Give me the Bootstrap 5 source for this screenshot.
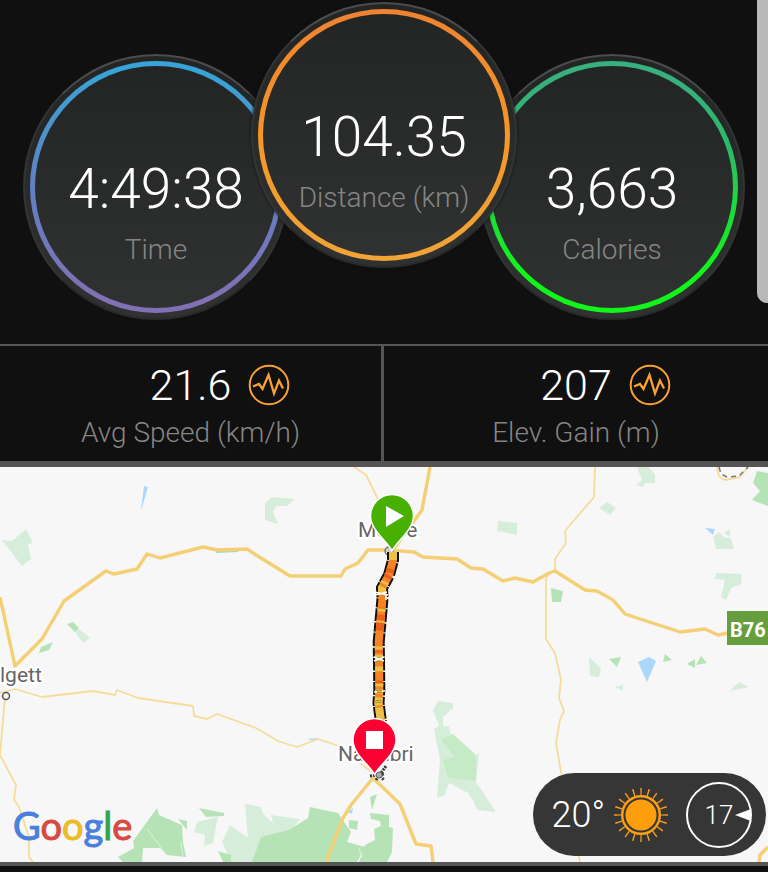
<!DOCTYPE html>
<html lang="en">
<head>
<meta charset="utf-8">
<meta name="viewport" content="width=device-width, initial-scale=1">
<title>Ride summary</title>
<link href="https://cdn.jsdelivr.net/npm/bootstrap@5.3.0/dist/css/bootstrap.min.css" rel="stylesheet">
<style>
body { background: #101010; font-family: Roboto, "Liberation Sans", sans-serif; font-weight: 300; }
.dials { padding: 2px 22px 24px; }
.dial { width: 266px; height: 266px; padding: 5px; background: linear-gradient(#232424, #303131); border: 2px solid #333434; border-top-color: #4c4c4e; border-bottom-color: #292a2a; flex: none; }
.dial-side { margin-top: 52px; }
.dial-main { margin: 0 -38px; z-index: 1; box-shadow: 0 0 3px #111; }
.ring { padding: 5px; }
.ring-time { background: linear-gradient(#38a3d6 5%, #6080c4 50%, #8270b4 95%); }
.ring-distance { background: linear-gradient(#ee8230, #f59628 50%, #f1a437); }
.ring-calories { background: linear-gradient(#36b07c 10%, #2bbb65 35%, #1bdd38 60%, #12f51a 85%); }
.face { background: linear-gradient(#232424, #303232); padding-top: 95px; }
.big-value { font-size: 55px; line-height: 56px; color: #fff; margin-bottom: 17px; }
.caption { font-size: 28px; line-height: 32px; color: #858585; }
.scroll-thumb { width: 11px; height: 303px; background: #b9b9b9; border-radius: 0 0 0 10px; }
.stats { border-top: 2px solid #555; border-bottom: 6px solid #555353; }
.stat { padding: 17px 0 12px; }
.stat:first-child { border-right: 3px solid #555; }
.stat-line { display: grid; grid-template-columns: 1fr auto 1fr; column-gap: 17px; align-items: center; }
.stat-line svg { grid-column: 3; }
.stat-value { grid-column: 2; font-size: 43px; line-height: 44px; color: #fff; }
.stat .caption { margin-top: 10px; }
.map { border-bottom: 4px solid #555; background: #f7f7f7; }
.place { font: 400 21px Roboto, "Liberation Sans", sans-serif; fill: #666; stroke: #fff; stroke-width: 5px; paint-order: stroke; stroke-linejoin: round; }
.shield { font: 700 20px Roboto, "Liberation Sans", sans-serif; fill: #fff; }
.brand { left: 13px; bottom: 15px; font: 400 38px/44px Lato, "Liberation Sans", sans-serif; }
.brand span { -webkit-text-stroke: 1px currentColor; }
.c-blue { color: #4a80dd; } .c-red { color: #d84a40; } .c-yellow { color: #ecbb25; } .c-green { color: #35a254; }
.weather { right: 2px; bottom: 6px; height: 83px; padding: 0 13px 0 18px; background: #363636; color: #fff; }
.temperature { font-size: 36px; line-height: 40px; }
.wind-text { font: 300 26px Roboto, "Liberation Sans", sans-serif; fill: #fff; }
</style>
</head>
<body>
<main class="position-relative overflow-hidden">
  <section class="dials d-flex justify-content-center align-items-start" aria-label="Totals">
    <div class="dial dial-side rounded-circle">
      <div class="ring ring-time rounded-circle h-100">
        <div class="face rounded-circle h-100 text-center">
          <div class="big-value">4:49:38</div>
          <div class="caption">Time</div>
        </div>
      </div>
    </div>
    <div class="dial dial-main rounded-circle">
      <div class="ring ring-distance rounded-circle h-100">
        <div class="face rounded-circle h-100 text-center">
          <div class="big-value">104.35</div>
          <div class="caption">Distance (km)</div>
        </div>
      </div>
    </div>
    <div class="dial dial-side rounded-circle">
      <div class="ring ring-calories rounded-circle h-100">
        <div class="face rounded-circle h-100 text-center">
          <div class="big-value">3,663</div>
          <div class="caption">Calories</div>
        </div>
      </div>
    </div>
  </section>
  <div class="scroll-thumb position-absolute top-0 end-0"></div>

  <section class="stats row g-0" aria-label="Averages">
    <div class="stat col-6 text-center">
      <div class="stat-line">
        <span class="stat-value">21.6</span>
        <svg width="42" height="42" viewBox="0 0 42 42" fill="none" stroke="#f9a132" aria-hidden="true"><circle cx="21" cy="21" r="19.3" stroke-width="2"/><path d="M5 22.500L11 20L14.500 25L20.500 11L26 29.500L31 16.500L35 24.500" stroke-width="2.300"/></svg>
      </div>
      <div class="caption">Avg Speed (km/h)</div>
    </div>
    <div class="stat col-6 text-center">
      <div class="stat-line">
        <span class="stat-value">207</span>
        <svg width="42" height="42" viewBox="0 0 42 42" fill="none" stroke="#f9a132" aria-hidden="true"><circle cx="21" cy="21" r="19.3" stroke-width="2"/><path d="M5 22.500L11 20L14.500 25L20.500 11L26 29.500L31 16.500L35 24.500" stroke-width="2.300"/></svg>
      </div>
      <div class="caption">Elev. Gain (m)</div>
    </div>
  </section>

  <section class="map position-relative" aria-label="Route map">
    <svg class="d-block w-100" viewBox="0 467 768 395" role="img" aria-label="Route from Moree to Narrabri">
      <g fill="#d6eed9">
        <path d="M2 540L12 541L26 529L33 543L28 544L31 559L22 566Z"/>
        <path d="M75 632L79 629L90 638L83 643Z"/>
        <path d="M272 497L295 499L287 506L276 506L273 512L278 524L265 520L265 503Z"/>
        <path d="M498 521L517 523L517 535L497 531Z"/>
        <path d="M637 467L648 467L655 474L655 483L645 483L643 487L636 485L642 480Z"/>
        <path d="M607 502L616 508L610 515L599 508Z"/>
        <path d="M719 532L725 538L731 538L734 549L716 549L713 537Z"/>
        <path d="M724 533L730 529L730 537Z"/>
        <path d="M716 573L742 574L741 584L731 588L726 600L721 597L725 580L715 579Z"/>
        <path d="M589 657L601 668L599 677L590 676Z"/>
        <path d="M615 687L623 685L623 691Z"/>
        <path d="M730 691L739 682L749 687Z"/>
        <path d="M438 701L453 703L453 708L443 717L443 726L449 726L450 733L476 756L479 753L476 782L496 812L477 810L474 802L468 793L449 783L444 796L437 797L440 760L434 729L439 726L433 710Z"/>
        <path d="M197 822L218 817L215 832L213 843L204 846L205 835L194 832Z"/>
        <path d="M245 804L261 807L263 814L273 823L271 815L300 819L290 832L256 862L231 862L222 842L230 825L248 838Z"/>
      </g>
      <path fill="#c5eac6" d="M453 734L476 755L476 781L448 778L443 760L455 757L441 740Z"/>
      <g fill="#b6e3b6">
        <path d="M67 624L73 622L79 628L75 632Z"/>
        <path d="M39 653L41 647L53 642L49 650Z"/>
        <path d="M757 471L768 473L768 506L752 500L760 491L753 483Z"/>
        <path d="M551 588L563 591L561 602L552 602Z"/>
        <path d="M609 659L621 657L617 667Z"/>
        <path d="M665 654L672 660L663 662Z"/>
        <path d="M687 664L695 659L695 668Z"/>
        <path d="M701 656L707 663L696 665Z"/>
        <path d="M157 808L159 815L182 825L183 842L186 857L167 855L160 848L143 848L142 862L123 862L118 857L134 848L133 841L152 815Z"/>
        <path d="M178 819L187 821L187 830Z"/>
        <path d="M199 808L224 813L224 816L206 817Z"/>
        <path d="M218 851L231 855L231 862L223 862Z"/>
        <path d="M252 862L261 837L289 830L308 818L310 807L338 813L351 832L347 842L365 847L357 862Z"/>
        <path d="M370 797L377 794L372 810Z"/>
        <path d="M349 820L358 821L357 830L349 828Z"/>
        <path d="M370 813L389 815L389 827L393 828L392 852L387 862L359 862L365 845L375 840L374 829L381 826L380 821L371 819Z"/>
      </g>
      <path d="M147 829L165 853M181 842L183 857M359 848L362 858" stroke="#dcf1dc" fill="none"/>
      <g fill="#abd7fd">
        <path d="M144 486L148 487L141 511Z"/>
        <path d="M705 528L715 529L713 535Z"/>
        <path d="M638 662L649 657L656 661L647 682Z"/>
        <path d="M348 812L353 808L352 814Z"/>
        <path d="M307 739L320 738L314 741Z"/>
      </g>
      <path d="M216 552L238 551" stroke="#a9d7c3" stroke-width="2"/>
      <g fill="none" stroke="#f6dc9c" stroke-width="1.8" stroke-linejoin="round">
        <path d="M354 467L366 475L377 497L391 549"/>
        <path d="M595 467L594 497L565 531L566 543L555 559L555 571"/>
        <path d="M548 574L546 580L546 639L555 653L561 680L559 698L564 711L560 720L556 743L561 772L580 862"/>
        <path d="M0 693L15 689L42 697L93 691L115 695L117 690L138 698L193 706L194 716L207 719L217 714L256 728L278 741L297 747L318 739L336 745L372 772"/>
        <path d="M5 697L0 755L16 785L14 800L19 807L29 837L29 857L33 862"/>
        <path d="M717 467L719 476L725 480L740 477L748 467"/>
      </g>
      <path d="M719 467L721 474L727 477L739 476L748 467" fill="none" stroke="#777" stroke-width="1.500" stroke-dasharray="5 4"/>
      <g fill="none" stroke="#f4cf74" stroke-width="3.400" stroke-linejoin="round">
        <path d="M0 597L15 666L42 639L64 601L106 571L114 574L137 569L147 554L160 558L203 547L217 550L247 549L256 555L290 576L341 576L345 569L358 563L368 550L388 550L414 552L423 557L457 559L471 568L483 569L503 581L515 578L533 582L549 573L555 571L585 590L597 591L613 600L625 614L680 632L705 629L718 635L728 633"/>
        <path d="M430 467L422 510L393 550"/>
        <path d="M326 862L343 818L351 805L373 778L400 804L416 844L431 846L433 862"/>
        <path d="M759 862L760 855L768 847"/>
      </g>
      <rect x="727" y="611" width="41" height="34" fill="#679e3d"/>
      <text class="shield" x="730" y="637">B76</text>
      <text class="place" x="358" y="537">Moree</text>
      <text class="place" x="338" y="761">Narrabri</text>
      <text class="place" x="0" y="682">lgett</text>
      <circle cx="6" cy="696" r="3.500" fill="#fff" stroke="#555" stroke-width="1.500"/>
      <circle cx="389" cy="551" r="4" fill="#ccc" stroke="#777" stroke-width="1.500"/>
      <g fill="none">
        <path d="M393 552L393 560L389 575L382 588L382.500 598L381.500 610L380 627L378.700 642L379 660L379.300 690L378.500 703L381 722" stroke="#fff" stroke-width="14" stroke-dasharray="1 6 2 9"/>
        <path d="M393 552L393 560L389 575L382 588L382.500 598L381.500 610L380 627L378.700 642L379 660L379.300 690L378.500 703L381 722" stroke="#111" stroke-width="12" stroke-dasharray="9 1 13 1.500"/>
        <path d="M393 552L393 560L389 575L382 588L382.500 598L381.500 610L380 627L378.700 642L379 660L379.300 690L378.500 703L381 722" stroke="#f68425" stroke-width="8"/>
        <path d="M393 552L393 560L389 575L382 588L382.500 598L381.500 610L380 627L378.700 642L379 660L379.300 690L378.500 703L381 722" stroke="#e9601d" stroke-width="8" stroke-dasharray="0 17 4 3 3 31 2 5 16 20 2 2 3 10 4 9 6 90"/>
        <path d="M393 552L393 560L389 575L382 588L382.500 598L381.500 610L380 627L378.700 642L379 660L379.300 690L378.500 703L381 722" stroke="#ecc044" stroke-width="8" stroke-dasharray="8 23 3 3 8 14 3 9 2 24 3 5 6 6 5 12 3 3 4 4 8 2 12"/>
        <path d="M379 657V662M379 690V693M378.500 700V704" stroke="#9c9430" stroke-width="6" stroke-dasharray="1 1"/>
        <path d="M374 592L388 595M375 595L387 592M386 594V600M374 657L384 661M374 661L384 657M374 692H377M382 691H385" stroke="#fff" stroke-width="1.500"/>
        <path d="M370 776L384 774M376 780L386 766M378 774L384 780" stroke="#333" stroke-width="3" stroke-dasharray="2 1"/>
        <circle cx="379" cy="775" r="3" fill="#aaa" stroke="#666"/>
      </g>
      <g stroke="#fff" stroke-width="1.500">
        <path fill="#47b000" d="M392 551C387 541 370.500 530 370.500 516A21.500 21.500 0 0 1 413.500 516C413.500 530 397 541 392 551Z"/>
        <path fill="#fb0030" d="M374.500 774.500C369.500 765 353 754 353 740A21.500 21.500 0 0 1 396 740C396 754 379.500 765 374.500 774.500Z"/>
      </g>
      <path d="M386 506L404 516L386 527Z" fill="#fff"/>
      <rect x="366" y="731" width="17" height="18" fill="#fff"/>
    </svg>
    <div class="brand position-absolute"><span class="c-blue">G</span><span class="c-red">o</span><span class="c-yellow">o</span><span class="c-blue">g</span><span class="c-green">l</span><span class="c-red">e</span></div>
    <div class="weather position-absolute rounded-pill d-flex align-items-center">
      <span class="temperature">20°</span>
      <svg class="ms-2" width="56" height="56" viewBox="-28 -28 56 56" fill="none" stroke="#fc9f16" aria-label="Sunny" role="img">
        <circle r="15.500" fill="#ff9e0d" stroke="none"/><circle r="18.800" stroke-width="2.400"/>
        <circle r="23.500" stroke-width="7" pathLength="200" stroke-dasharray="1.800 8.200" stroke-dashoffset="0.900"/>
      </svg>
      <svg class="ms-3" width="68" height="68" viewBox="-34 -34 68 68" aria-label="Wind 17" role="img">
        <circle r="32" fill="none" stroke="#fff" stroke-width="2"/>
        <path d="M16 0L32 -6V6Z" fill="#fff"/>
        <text class="wind-text" x="0" y="9" text-anchor="middle">17</text>
      </svg>
    </div>
  </section>
</main>
<script src="https://cdn.jsdelivr.net/npm/bootstrap@5.3.0/dist/js/bootstrap.bundle.min.js"></script>
</body>
</html>
